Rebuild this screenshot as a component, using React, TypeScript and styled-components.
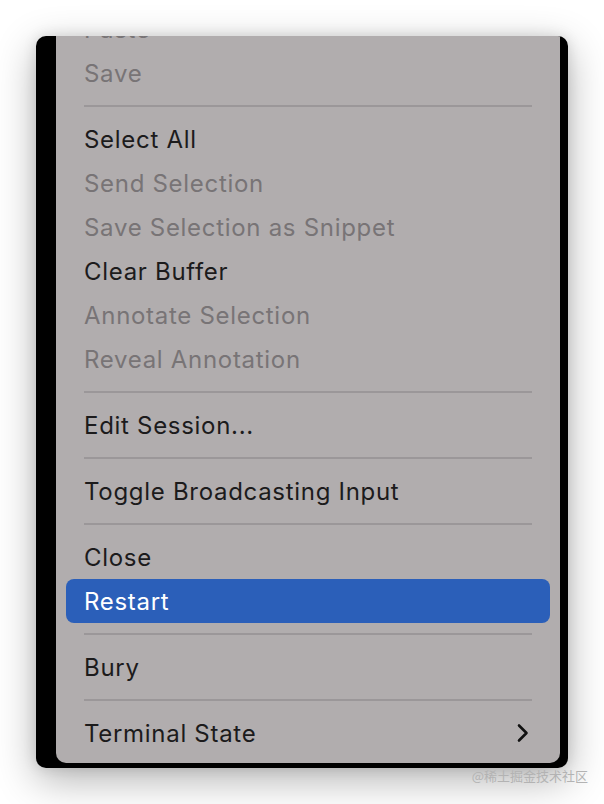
import React from "react";
import styled, { createGlobalStyle } from "styled-components";

const Global = createGlobalStyle`
  html, body { margin: 0; padding: 0; background: #ffffff; }
  body { width: 604px; height: 804px; overflow: hidden; }
`;

const Page = styled.div`
  position: relative;
  width: 604px;
  height: 804px;
  padding: 36px 0 0 36px;
  box-sizing: border-box;
  font-family: Inter, "Noto Sans", sans-serif;
`;

const Window = styled.div`
  width: 532px;
  height: 732px;
  background: #000;
  border-radius: 10px;
  overflow: hidden;
  box-shadow: 0 12px 40px rgba(0, 0, 0, 0.3), 0 0 14px rgba(0, 0, 0, 0.12);
  display: flex;
  padding: 0 8px 0 20px;
  box-sizing: border-box;
`;

const Menu = styled.div`
  width: 504px;
  align-self: flex-start;
  margin-top: -29px;
  background: #b1adae;
  border-radius: 0 0 10px 10px;
  padding-bottom: 8px;
  display: flex;
  flex-direction: column;
`;

const Row = styled.div<{ $disabled?: boolean; $active?: boolean }>`
  height: 44px;
  margin: 0 10px;
  padding: 0 20px 0 18px;
  border-radius: 8px;
  display: flex;
  align-items: center;
  justify-content: space-between;
  font-size: 24px;
  letter-spacing: 0.7px;
  color: ${(p) => (p.$active ? "#ffffff" : p.$disabled ? "#787476" : "#1c1b1c")};
  background: ${(p) => (p.$active ? "#2b5fb9" : "transparent")};
`;

const Separator = styled.div`
  height: 22px;
  margin: 0 28px;
  display: flex;
  align-items: center;
  &::after {
    content: "";
    flex: 1;
    height: 2px;
    background: #9b9799;
  }
`;

const Watermark = styled.div`
  position: absolute;
  right: 16px;
  bottom: 19px;
  font-family: "Noto Sans CJK SC", sans-serif;
  font-size: 13px;
  color: #b3b3b3;
`;

const Chevron = () => (
  <svg width="14" height="20" viewBox="0 0 14 20">
    <path d="M3 2.5 L10.5 10 L3 17.5" fill="none" stroke="#111" strokeWidth="2.6" strokeLinecap="round" strokeLinejoin="round" />
  </svg>
);

type Item = { label: string; disabled?: boolean; active?: boolean; sub?: boolean } | "sep";

const items: Item[] = [
  { label: "Paste", disabled: true },
  { label: "Save", disabled: true },
  "sep",
  { label: "Select All" },
  { label: "Send Selection", disabled: true },
  { label: "Save Selection as Snippet", disabled: true },
  { label: "Clear Buffer" },
  { label: "Annotate Selection", disabled: true },
  { label: "Reveal Annotation", disabled: true },
  "sep",
  { label: "Edit Session..." },
  "sep",
  { label: "Toggle Broadcasting Input" },
  "sep",
  { label: "Close" },
  { label: "Restart", active: true },
  "sep",
  { label: "Bury" },
  "sep",
  { label: "Terminal State", sub: true },
];

export default function App() {
  return (
    <Page>
      <Global />
      <Window>
        <Menu>
          {items.map((it, i) =>
            it === "sep" ? (
              <Separator key={i} />
            ) : (
              <Row key={i} $disabled={it.disabled} $active={it.active}>
                <span>{it.label}</span>
                {it.sub && <Chevron />}
              </Row>
            )
          )}
        </Menu>
      </Window>
      <Watermark>@稀土掘金技术社区</Watermark>
    </Page>
  );
}
